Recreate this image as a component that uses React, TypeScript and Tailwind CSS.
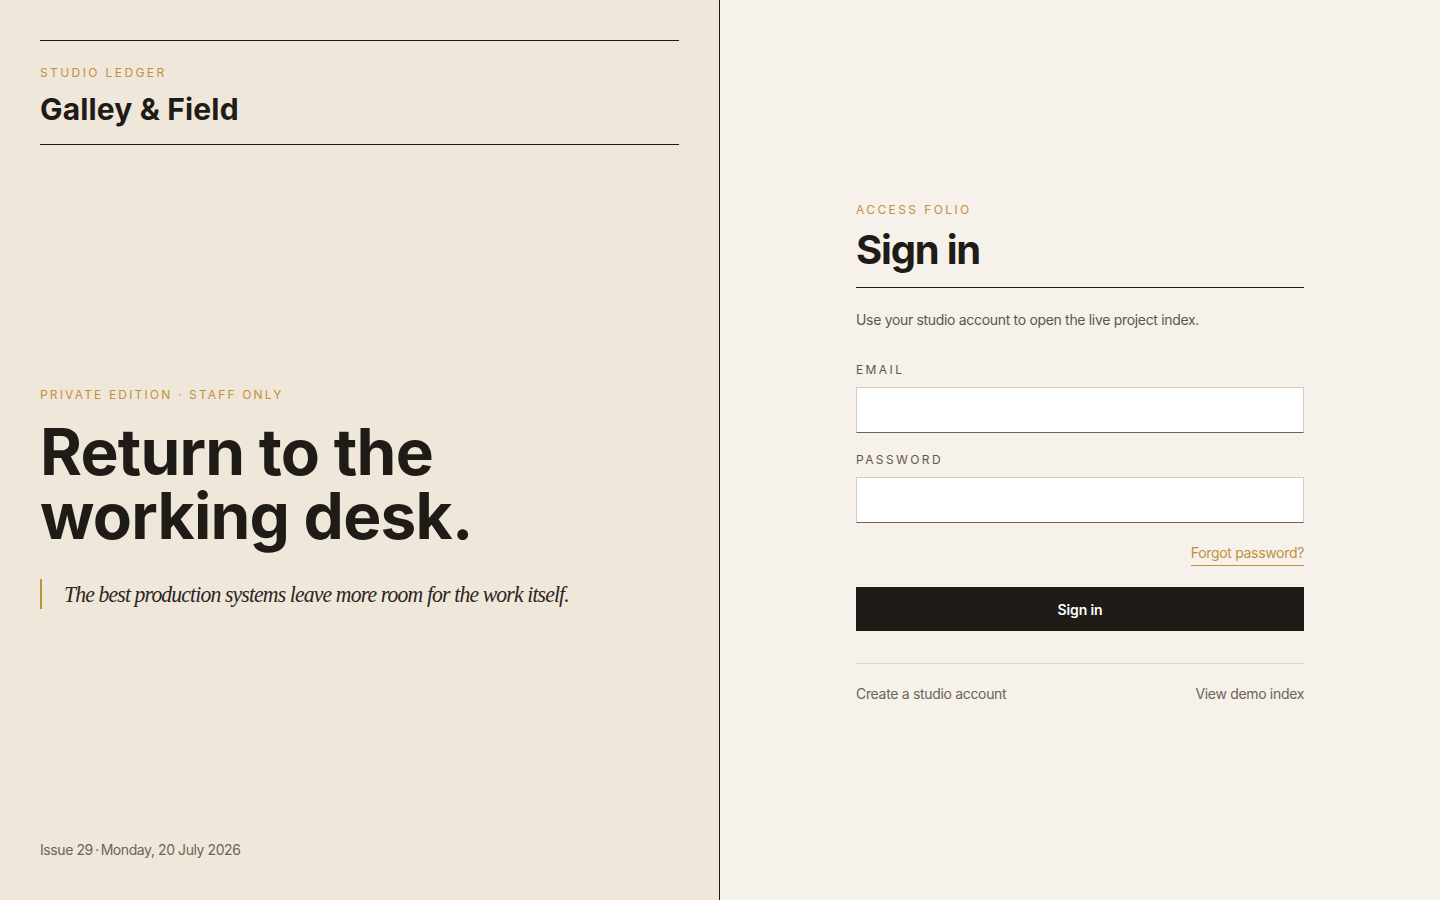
import React from "react";

export default function App() {
  return (
    <div className="flex h-[900px] w-[1440px] overflow-hidden font-['Inter',sans-serif] text-[#1f1b16]">
      {/* Left panel */}
      <div className="flex w-[720px] shrink-0 flex-col justify-between border-r border-[#1f1b16] bg-[#efe7d9] px-10 pb-[40px] pt-10">
        <div className="border-y border-[#1f1b16] pb-[17px] pt-[24px]">
          <div className="text-[12px] leading-[16px] tracking-[0.2em] text-[#c0913a]">STUDIO LEDGER</div>
          <div className="mt-[10px] text-[30px] font-bold leading-[36px] tracking-[0.005em]">Galley &amp; Field</div>
        </div>

        <div className="mt-[10px]">
          <div className="text-[12px] leading-[16px] tracking-[0.18em] text-[#c0913a]">PRIVATE EDITION · STAFF ONLY</div>
          <h1 className="mt-[17px] text-[64px] font-bold leading-[64px] tracking-[-0.012em]">
            <span className="block">Return to the</span>
            <span className="block">working desk.</span>
          </h1>
          <div className="mt-[31px] border-l-2 border-[#c0913a] pl-[22px]">
            <p className="origin-left scale-x-[0.905] whitespace-nowrap font-['Liberation_Serif',serif] text-[24px] italic leading-[30px] tracking-[-0.04em] text-[#2a251f]">
              The best production systems leave more room for the work itself.
            </p>
          </div>
        </div>

        <div className="text-[14px] leading-[20px] tracking-[-0.03em] text-[#6b645a]">Issue 29{"\u2009·\u2009"}Monday, 20 July 2026</div>
      </div>

      {/* Right panel */}
      <div className="flex flex-1 items-center justify-center bg-[#f6f1ea]">
        <div className="w-[448px] pt-[6px] tracking-[-0.02em]">
          <div className="text-[12px] leading-[16px] tracking-[0.2em] text-[#c0913a]">ACCESS FOLIO</div>
          <h2 className="mt-[8px] border-b border-[#1f1b16] pb-[13px] text-[40px] font-bold leading-[48px] tracking-[-0.03em]">Sign in</h2>
          <p className="mt-[22px] text-[14px] leading-[20px] text-[#5e574d]">
            Use your studio account to open the live project index.
          </p>

          <label className="mt-[32px] block text-[12px] leading-[16px] tracking-[0.2em] text-[#5e574d]">EMAIL</label>
          <input
            type="email"
            className="mt-[9px] block h-[46px] w-full border border-[#d8cdbf] border-b-[#6b645a] bg-white px-3 text-[14px] outline-none"
          />

          <label className="mt-[19px] block text-[12px] leading-[16px] tracking-[0.2em] text-[#5e574d]">PASSWORD</label>
          <input
            type="password"
            className="mt-[9px] block h-[46px] w-full border border-[#d8cdbf] border-b-[#6b645a] bg-white px-3 text-[14px] outline-none"
          />

          <div className="mt-[20px] flex justify-end">
            <a href="#" className="border-b border-[#c0913a] pb-[2px] text-[14px] leading-[20px] text-[#c0913a]">
              Forgot password?
            </a>
          </div>

          <button className="mt-[21px] flex h-[44px] w-full items-center justify-center bg-[#1f1b16] text-[14px] font-semibold tracking-[-0.01em] text-white">
            Sign in
          </button>

          <div className="mt-[32px] flex justify-between border-t border-[#e3d4cc] pt-[20px] text-[14px] leading-[20px] text-[#6b645a]">
            <a href="#">Create a studio account</a>
            <a href="#">View demo index</a>
          </div>
        </div>
      </div>
    </div>
  );
}
